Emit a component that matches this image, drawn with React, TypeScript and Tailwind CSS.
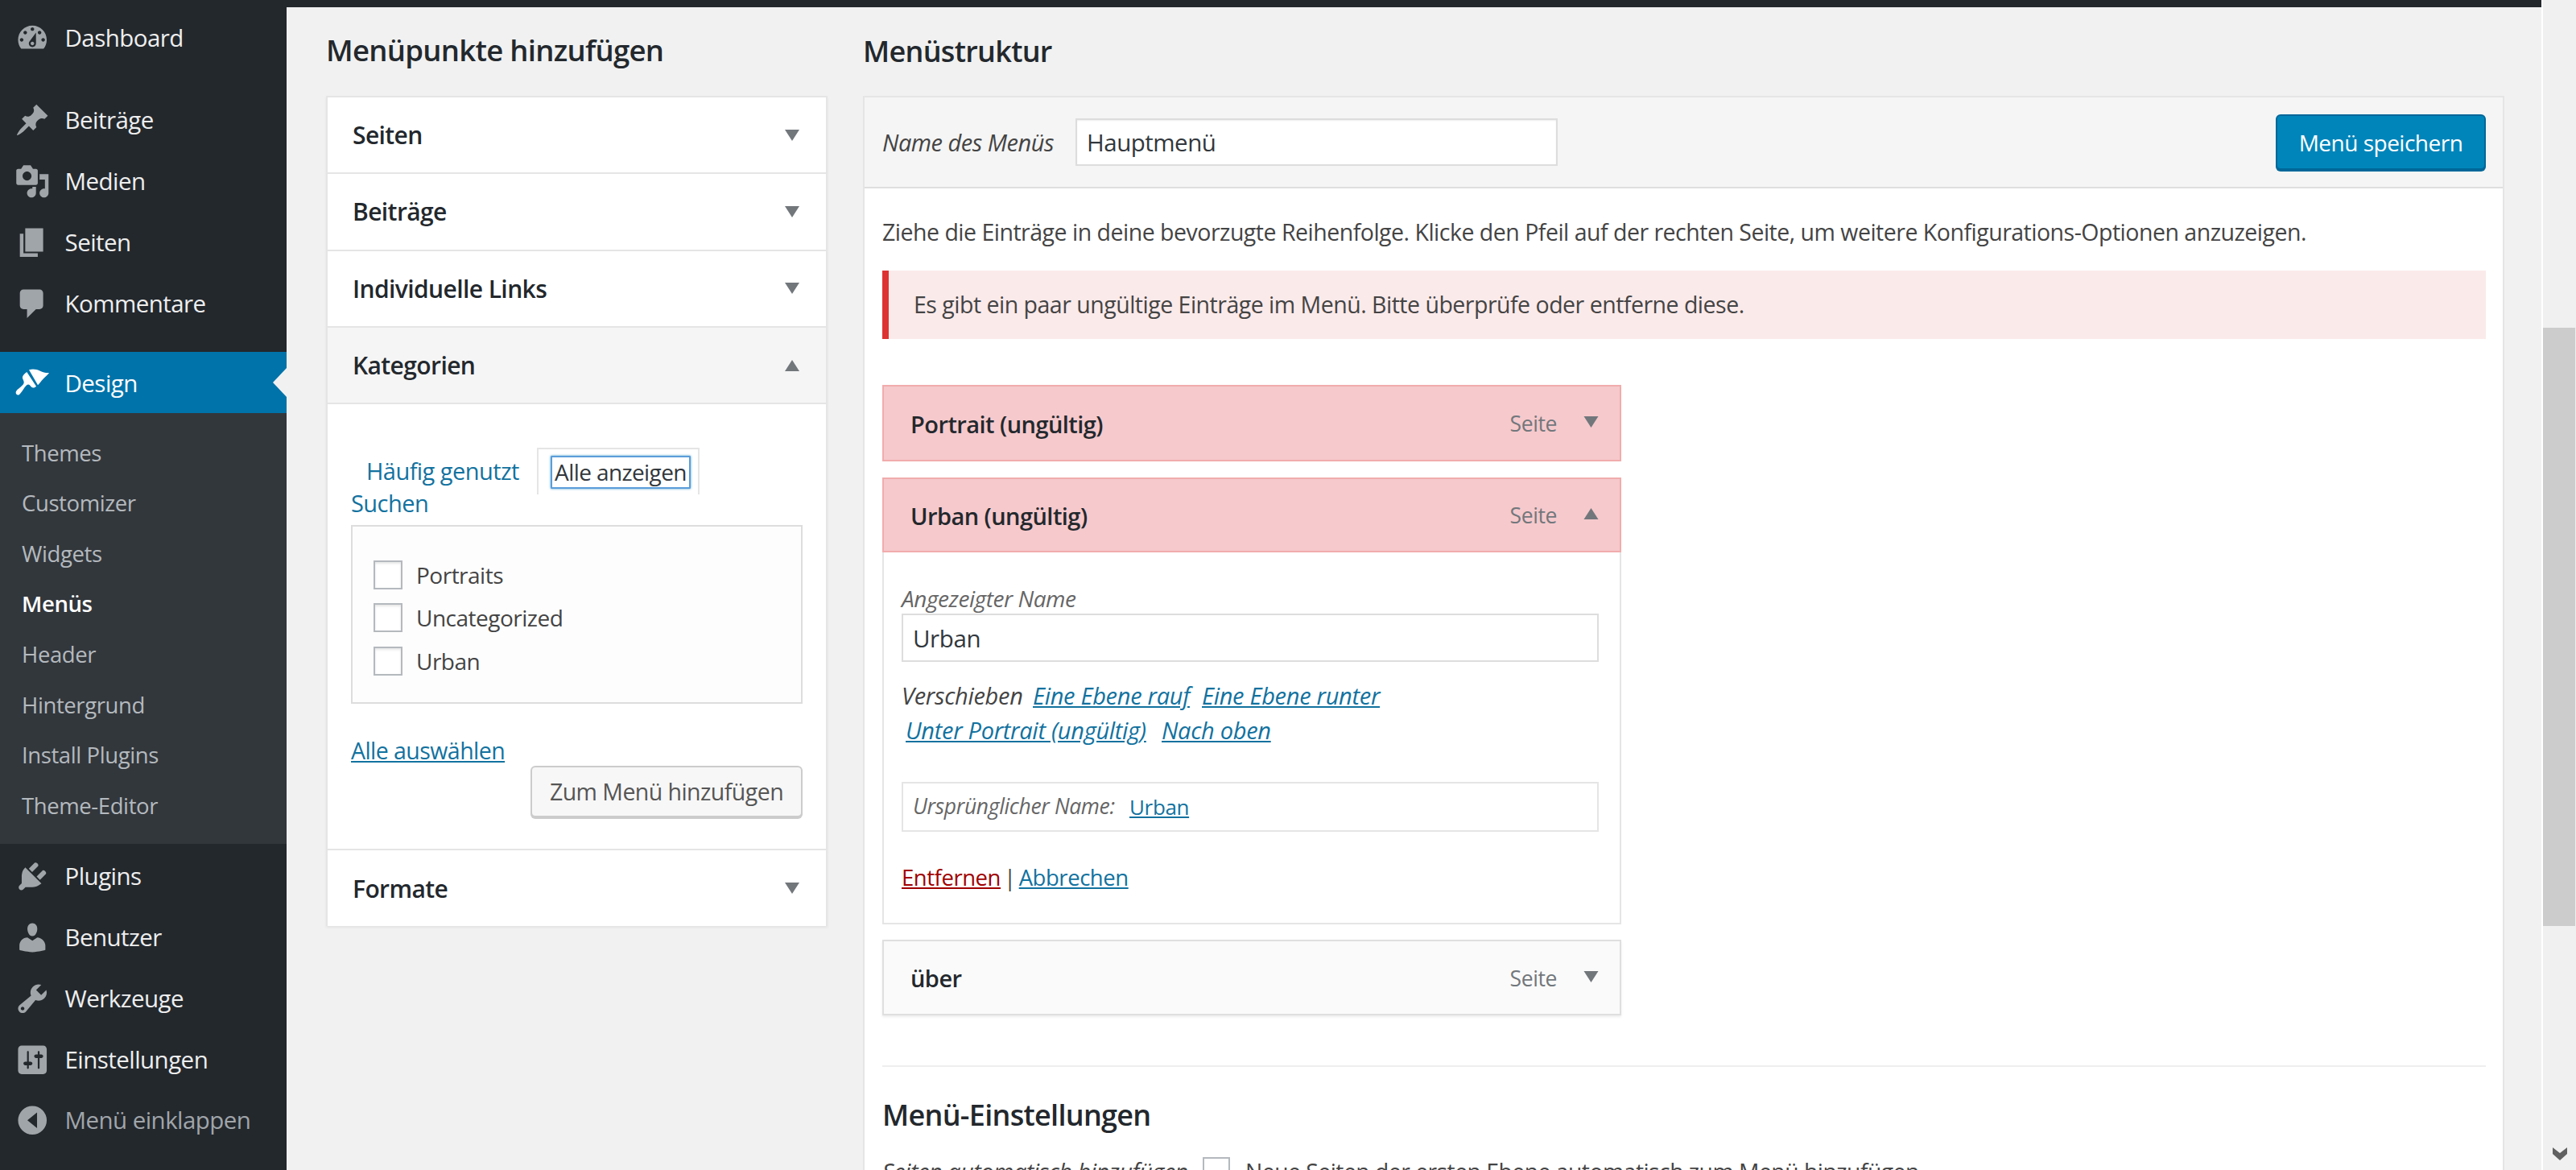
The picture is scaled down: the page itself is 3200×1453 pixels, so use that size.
import React from "react";

const P: Record<string, string> = {
  dashboard: "M3.76 16h12.48c1.1-1.37 1.76-3.11 1.76-5 0-4.42-3.58-8-8-8s-8 3.58-8 8c0 1.89.66 3.63 1.76 5zM10 4c.55 0 1 .45 1 1s-.45 1-1 1-1-.45-1-1 .45-1 1-1zM6 6c.55 0 1 .45 1 1s-.45 1-1 1-1-.45-1-1 .45-1 1-1zm8 0c.55 0 1 .45 1 1s-.45 1-1 1-1-.45-1-1 .45-1 1-1zm-5.37 5.55L12 7v6c0 1.1-.9 2-2 2s-2-.9-2-2c0-.57.24-1.08.63-1.45zM4 10c.55 0 1 .45 1 1s-.45 1-1 1-1-.45-1-1 .45-1 1-1zm12 0c.55 0 1 .45 1 1s-.45 1-1 1-1-.45-1-1 .45-1 1-1zm-5 3c0-.55-.45-1-1-1s-1 .45-1 1 .45 1 1 1 1-.45 1-1z",
  post: "M10.44 3.02l1.82-1.82 6.36 6.35-1.83 1.82c-1.05-.68-2.48-.57-3.41.36l-.75.75c-.92.93-1.04 2.35-.35 3.41l-1.83 1.82-2.41-2.41-2.8 2.79c-.42.42-3.38 2.71-3.8 2.29s1.86-3.39 2.28-3.81l2.79-2.79L4.1 9.36l1.83-1.82c1.05.69 2.48.57 3.4-.36l.75-.75c.93-.92 1.05-2.35.36-3.41z",
  media: "M13 11V4c0-.55-.45-1-1-1h-1.67L9 1H5L3.67 3H2c-.55 0-1 .45-1 1v7c0 .55.45 1 1 1h10c.55 0 1-.45 1-1zM7 4.5c1.38 0 2.5 1.12 2.5 2.5S8.38 9.5 7 9.5 4.5 8.38 4.5 7 5.62 4.5 7 4.5zM14 6h5v10.5c0 1.38-1.12 2.5-2.5 2.5S14 17.88 14 16.5s1.12-2.5 2.5-2.5c.17 0 .34.02.5.05V9h-3V6zm-4 8.05V13h2v3.5c0 1.38-1.12 2.5-2.5 2.5S7 17.88 7 16.5 8.12 14 9.5 14c.17 0 .34.02.5.05z",
  page: "M6 15V2h10v13H6zm-1 1h8v2H3V5h2v11z",
  comment: "M5 2h9c1.1 0 2 .9 2 2v7c0 1.1-.9 2-2 2h-2l-5 5v-5H5c-1.1 0-2-.9-2-2V4c0-1.1.9-2 2-2z",
  plugin: "M13.11 4.36L9.87 7.6 8 5.73l3.24-3.24c.35-.34 1.05-.2 1.56.32.52.51.66 1.21.31 1.55zm-8 1.77l.91-1.12 9.01 9.01-1.19.84c-.71.71-2.63 1.16-3.82 1.16H6.14L4.9 17.26c-.59.59-1.54.59-2.12 0-.59-.58-.59-1.53 0-2.12l1.24-1.24v-3.88c0-1.13.4-3.19 1.09-3.89zm7.26 3.97l3.24-3.24c.34-.35 1.04-.21 1.55.31.52.51.66 1.21.31 1.55l-3.24 3.25z",
  users: "M10 9.25c-2.27 0-2.73-3.44-2.73-3.44C7 4.02 7.82 2 9.97 2c2.16 0 2.98 2.02 2.71 3.81 0 0-.41 3.44-2.68 3.44zm0 2.57L12.72 10c2.39 0 4.52 2.33 4.52 4.53v2.49s-3.65 1.13-7.24 1.13c-3.65 0-7.24-1.13-7.24-1.13v-2.49c0-2.25 1.94-4.48 4.47-4.48z",
  tools: "M16.68 9.77c-1.34 1.34-3.3 1.67-4.95.99l-5.41 6.52c-.99.99-2.59.99-3.58 0s-.99-2.59 0-3.57l6.52-5.42c-.68-1.65-.35-3.61.99-4.95 1.28-1.28 3.12-1.62 4.72-1.06l-2.89 2.89 2.82 2.82 2.86-2.87c.53 1.58.18 3.39-1.08 4.65zM3.81 16.21c.4.39 1.04.39 1.43 0 .4-.4.4-1.04 0-1.43-.39-.4-1.03-.4-1.43 0-.39.39-.39 1.03 0 1.43z",
  settings: "M18 16V4c0-1.1-.9-2-2-2H4c-1.1 0-2 .9-2 2v12c0 1.1.9 2 2 2h12c1.1 0 2-.9 2-2zM8 11h1c.55 0 1 .45 1 1s-.45 1-1 1H8v1.5c0 .28-.22.5-.5.5s-.5-.22-.5-.5V13H6c-.55 0-1-.45-1-1s.45-1 1-1h1V5.5c0-.28.22-.5.5-.5s.5.22.5.5V11zm5-2h-1c-.55 0-1-.45-1-1s.45-1 1-1h1V5.5c0-.28.22-.5.5-.5s.5.22.5.5V7h1c.55 0 1 .45 1 1s-.45 1-1 1h-1v5.5c0 .28-.22.5-.5.5s-.5-.22-.5-.5V9z",
  collapse: "M10 2a8 8 0 1 0 0 16 8 8 0 0 0 0-16zM12.6 5.6v8.8L7.2 10z",
};

const BRUSH =
  "M66 27C78 22 95 24 108 31C118 36 130 39 141 38C135 46 127 52 120 60C112 68 106 78 99 84ZM58 35L93 88C88 94 80 96 74 90L68 83C62 78 56 84 50 92C44 102 36 114 30 119C24 124 16 118 17 110C18 104 26 98 36 90C42 84 50 78 46 68L42 58C40 50 50 40 58 35Z";

function Dash({ d, className, box = "0 0 20 20" }: { d: string; className: string; box?: string }) {
  return (
    <svg viewBox={box} className={"h-[44.5px] w-[44.5px] shrink-0 fill-current " + className}>
      <path d={d} fillRule="evenodd" />
    </svg>
  );
}

function Item({ icon, label }: { icon: string; label: string }) {
  return (
    <div className="flex h-[76px] items-center gap-[18px] pl-[18px] text-[29.5px] tracking-[-0.55px] text-[#eeeeee]">
      <Dash d={P[icon]} className="text-[#a0a5aa]" />
      <span className="pt-[1px]">{label}</span>
    </div>
  );
}

function Sub({ label, on }: { label: string; on?: boolean }) {
  return (
    <div className={"flex h-[62.6px] items-center pl-[27px] text-[27.5px] tracking-[-0.4px] " + (on ? "font-semibold text-white" : "text-[#b4b9be]")}>
      {label}
    </div>
  );
}

function Arrow({ up, className }: { up?: boolean; className: string }) {
  return (
    <svg viewBox="0 0 18 14" className={"fill-current text-[#72777c] " + className}>
      <polygon points={up ? "9,0 18,14 0,14" : "0,0 18,0 9,14"} />
    </svg>
  );
}

function Acc({ label, open }: { label: string; open?: boolean }) {
  return (
    <div className={"flex h-[95.3px] items-center justify-between border-b-2 border-[#e5e5e5] pl-[31px] pr-[33px] text-[30px] font-semibold tracking-[-0.6px] text-[#23282d] " + (open ? "bg-[#f5f5f5]" : "bg-white")}>
      <span>{label}</span>
      <Arrow up={open} className="h-[14px] w-[18px]" />
    </div>
  );
}

function Check({ label }: { label: string }) {
  return (
    <div className="flex h-[53.5px] items-center gap-[17px] text-[28px] tracking-[-0.5px] text-[#444444]">
      <span className="h-[36px] w-[36px] shrink-0 border-2 border-[#b4b9be] bg-white shadow-[inset_0_2px_3px_rgba(0,0,0,0.1)]" />
      <span>{label}</span>
    </div>
  );
}

function MenuRow({ label, tone, up, h }: { label: string; tone: string; up?: boolean; h: string }) {
  return (
    <div className={"flex items-center border-2 pl-[33px] pr-[26px] " + h + " " + tone}>
      <span className="flex-1 pt-[2px] text-[29px] font-semibold tracking-[-0.55px] text-[#23282d]">{label}</span>
      <span className="mr-[33px] pt-[3px] text-[26.5px] tracking-[-0.4px] text-[#72777c]">Seite</span>
      <Arrow up={up} className="mb-[3px] h-[14px] w-[19px]" />
    </div>
  );
}

export default function App() {
  return (
    <div className="flex h-[1453px] w-[3200px] overflow-hidden bg-[#f1f1f1] font-['Open_Sans','Noto_Sans',sans-serif] text-[#444444]">
      {/* admin sidebar */}
      <aside className="relative w-[356px] shrink-0 bg-[#23282d] pt-[9px]">
        <Item icon="dashboard" label="Dashboard" />
        <div className="mt-[26px]">
          <Item icon="post" label="Beiträge" />
          <Item icon="media" label="Medien" />
          <Item icon="page" label="Seiten" />
          <Item icon="comment" label="Kommentare" />
        </div>
        <div className="mt-[22px] flex h-[76px] items-center gap-[18px] bg-[#0073aa] pl-[18px] text-[29.5px] tracking-[-0.55px] text-white">
          <Dash d={BRUSH} box="12 8 133.5 133.5" className="text-white" />
          <span className="pt-[2px]">Design</span>
        </div>
        <div className="h-[535px] bg-[#32373c] pt-[18px]">
          <Sub label="Themes" />
          <Sub label="Customizer" />
          <Sub label="Widgets" />
          <Sub label="Menüs" on />
          <Sub label="Header" />
          <Sub label="Hintergrund" />
          <Sub label="Install Plugins" />
          <Sub label="Theme-Editor" />
        </div>
        <div className="mt-[2px]">
          <Item icon="plugin" label="Plugins" />
          <Item icon="users" label="Benutzer" />
          <Item icon="tools" label="Werkzeuge" />
          <Item icon="settings" label="Einstellungen" />
        </div>
        <div className="flex h-[74px] items-center gap-[18px] pl-[18px] text-[29.5px] tracking-[-0.55px] text-[#a0a5aa]">
          <Dash d={P.collapse} className="text-[#a0a5aa]" />
          <span className="pt-[1px]">Menü einklappen</span>
        </div>
        <div className="absolute left-[339px] top-[457px] h-0 w-0 border-y-[18px] border-r-[17px] border-y-transparent border-r-[#f1f1f1]" />
      </aside>

      {/* main */}
      <div className="flex w-[2801px] shrink-0 flex-col">
        <div className="h-[9px] shrink-0 bg-[#23282d]" />
        <div className="flex pl-[49px]">
          {/* left column */}
          <section className="w-[623px] shrink-0">
            <h2 className="flex h-[110px] items-center pb-[3px] text-[36.5px] font-semibold tracking-[-0.7px] text-[#23282d]">Menüpunkte hinzufügen</h2>
            <div className="border-2 border-b-0 border-[#e5e5e5] bg-white shadow-[0_2px_3px_rgba(0,0,0,0.06)]">
              <Acc label="Seiten" />
              <Acc label="Beiträge" />
              <Acc label="Individuelle Links" />
              <Acc label="Kategorien" open />
              <div className="h-[554px] border-b-2 border-[#e5e5e5] pl-[29px] pr-[29px] pt-[54px]">
                <div className="flex h-[58px] items-stretch pl-[19px] text-[29px] tracking-[-0.55px]">
                  <span className="flex w-[212px] items-center text-[#12729f]">Häufig genutzt</span>
                  <div className="flex w-[202px] items-center justify-center border-x-2 border-t-2 border-[#e5e5e5]">
                    <span className="ml-[6px] flex h-[41px] w-[174px] items-center justify-center whitespace-nowrap rounded-[1px] border-2 border-[#5b9dd9] text-[28px] tracking-[-0.6px] text-[#32373c] shadow-[0_0_3px_rgba(30,140,190,0.8)]">Alle anzeigen</span>
                  </div>
                </div>
                <div className="-mt-[4px] flex h-[30px] items-center text-[29px] tracking-[-0.55px] text-[#12729f]">Suchen</div>
                <div className="mt-[12px] h-[222px] border-2 border-[#dddddd] bg-[#fdfdfd] pl-[26px] pt-[33px]">
                  <Check label="Portraits" />
                  <Check label="Uncategorized" />
                  <Check label="Urban" />
                </div>
                <div className="mt-[42px] text-[28.5px] leading-[32px] tracking-[-0.55px] text-[#12729f] underline">Alle auswählen</div>
                <div className="flex justify-end">
                  <span className="mt-[3px] flex h-[64px] w-[338px] items-center justify-center rounded-[6px] border-2 border-[#cccccc] bg-[#f7f7f7] text-[28.5px] tracking-[-0.55px] text-[#555555] shadow-[0_2px_0_#cccccc]">Zum Menü hinzufügen</span>
                </div>
              </div>
              <div className="flex h-[94px] items-center justify-between pl-[31px] pr-[33px] text-[30px] font-semibold tracking-[-0.6px] text-[#23282d]">
                <span>Formate</span>
                <Arrow className="h-[14px] w-[18px]" />
              </div>
            </div>
          </section>

          {/* right column */}
          <section className="ml-[44px] w-[2039px] shrink-0">
            <h2 className="flex h-[110px] items-center pb-[1px] text-[36px] font-semibold tracking-[-0.7px] text-[#23282d]">Menüstruktur</h2>
            <div className="h-[1400px] border-x-2 border-t-2 border-[#e5e5e5] bg-white">
              <div className="flex h-[113px] items-center justify-between border-b-2 border-[#dfdfdf] bg-[#f5f5f5] pl-[22px] pr-[21px]">
                <div className="flex items-center">
                  <span className="w-[240px] text-[29px] italic tracking-[-0.5px] text-[#444444]">Name des Menüs</span>
                  <span className="flex h-[59px] w-[599px] items-center border-2 border-[#dddddd] bg-white pl-[12px] pt-[2px] text-[29.5px] tracking-[-0.5px] text-[#32373c] shadow-[inset_0_1px_2px_rgba(0,0,0,0.07)]">Hauptmenü</span>
                </div>
                <span className="flex h-[69px] w-[261px] items-center justify-center rounded-[6px] border-2 border-[#006799] bg-[#0085ba] text-[28px] tracking-[-0.5px] text-white shadow-[0_2px_0_#006799]">Menü speichern</span>
              </div>
              <div className="pl-[22px] pr-[21px]">
                <p className="mt-[36px] h-[36px] text-[28.5px] leading-[36px] tracking-[-0.5px] text-[#444444]">Ziehe die Einträge in deine bevorzugte Reihenfolge. Klicke den Pfeil auf der rechten Seite, um weitere Konfigurations-Optionen anzuzeigen.</p>
                <div className="mt-[30px] flex h-[85px] items-center border-l-[8px] border-[#dc3232] bg-[#fbeaea] pl-[31px] text-[28.5px] tracking-[-0.5px] text-[#444444]">Es gibt ein paar ungültige Einträge im Menü. Bitte überprüfe oder entferne diese.</div>

                <div className="mt-[57px] w-[918px]">
                  <MenuRow label="Portrait (ungültig)" tone="border-[#f1acac] bg-[#f6c9cc]" h="h-[95px]" />
                  <div className="mt-[20px]">
                    <MenuRow label="Urban (ungültig)" tone="border-[#f1acac] bg-[#f6c9cc]" up h="h-[93px]" />
                  </div>
                  <div className="h-[462px] border-x-2 border-b-2 border-[#e5e5e5] bg-white pl-[22px] pr-[26px] pt-[42px]">
                    <div className="text-[28px] italic leading-[30px] tracking-[-0.45px] text-[#666666]">Angezeigter Name</div>
                    <div className="mt-[4px] flex h-[60px] items-center border-2 border-[#dddddd] pl-[12px] pt-[3px] text-[29.5px] tracking-[-0.4px] text-[#32373c]">Urban</div>
                    <div className="mt-[20px] flex h-[43px] items-center text-[29px] italic tracking-[-0.3px] text-[#444444]">
                      <span className="w-[163px]">Verschieben</span>
                      <span className="w-[210px] text-[#12729f]"><span className="underline">Eine Ebene rauf</span></span>
                      <span className="text-[#12729f] underline">Eine Ebene runter</span>
                    </div>
                    <div className="flex h-[43px] items-center pl-[5px] text-[29px] italic tracking-[-0.3px] text-[#12729f]">
                      <span className="w-[318px]"><span className="underline">Unter Portrait (ungültig)</span></span>
                      <span className="underline">Nach oben</span>
                    </div>
                    <div className="mt-[43px] flex h-[62px] items-center border-2 border-[#e5e5e5] pl-[12px] text-[26.5px] tracking-[-0.35px]">
                      <span className="w-[269px] italic text-[#666666]">Ursprünglicher Name:</span>
                      <span className="text-[26px] text-[#12729f] underline">Urban</span>
                    </div>
                    <div className="mt-[39px] flex items-center text-[27.5px] leading-[36px] tracking-[-0.45px]">
                      <span className="text-[#a00000] underline">Entfernen</span>
                      <span className="mx-[4px] text-[#444444]">|</span>
                      <span className="text-[#12729f] underline">Abbrechen</span>
                    </div>
                  </div>
                  <div className="mt-[19px] shadow-[0_2px_3px_rgba(0,0,0,0.08)]">
                    <MenuRow label="über" tone="border-[#dfdfdf] bg-[#fafafa]" h="h-[94px]" />
                  </div>
                </div>

                <div className="mt-[62px] h-[2px] bg-[#eeeeee]" />
                <h3 className="mt-[37px] text-[36px] font-semibold leading-[46px] tracking-[-0.7px] text-[#23282d]">Menü-Einstellungen</h3>
                <div className="mt-[25px] flex items-center text-[28.3px] tracking-[-0.5px]">
                  <span className="w-[398px] text-[29px] italic text-[#444444]">Seiten automatisch hinzufügen</span>
                  <span className="h-[36px] w-[34px] border-2 border-[#b4b9be] bg-white" />
                  <span className="ml-[19px] text-[#444444]">Neue Seiten der ersten Ebene automatisch zum Menü hinzufügen</span>
                </div>
              </div>
            </div>
          </section>
        </div>
      </div>

      {/* page scrollbar */}
      <div className="flex flex-1 flex-col items-stretch border-l-2 border-white bg-[#f0f0f0]">
        <div className="mr-[1px] mt-[407px] h-[743px] bg-[#cccccc]" />
        <div className="mt-[275px] flex justify-center">
          <svg viewBox="0 0 18 16" className="h-[16px] w-[18px] fill-[#606060]"><polygon points="0,0 9,7 18,0 18,8 9,16 0,8" /></svg>
        </div>
      </div>
    </div>
  );
}
